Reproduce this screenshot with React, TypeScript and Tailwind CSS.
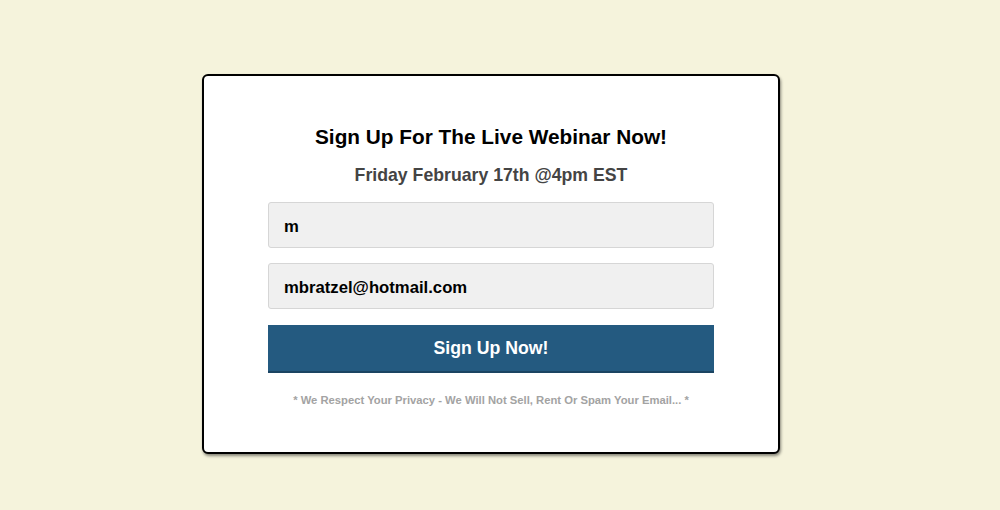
import React from "react"

export default function App() {
  return (
    <div
      className="min-h-[510px] w-full bg-[#f5f3dc] flex justify-center pt-[74px] pr-[18px]"
      style={{ fontFamily: '"Liberation Sans", Arial, sans-serif' }}
    >
      <div className="w-[578px] h-[380px] bg-white border-2 border-black rounded-[6px] shadow-[1px_2px_3px_rgba(0,0,0,0.45)] flex flex-col items-center pt-[49px]">
        <h1 className="text-[20.8px] leading-[24px] font-bold text-black">
          Sign Up For The Live Webinar Now!
        </h1>
        <h2 className="mt-[15px] text-[17.7px] leading-[22px] font-bold text-[#444]">
          Friday February 17th @4pm EST
        </h2>
        <div className="mt-[16px] w-[446px] flex flex-col">
          <input
            defaultValue="m"
            className="h-[46px] w-full bg-[#f0f0f0] border border-[#d6d6d6] rounded-[3px] px-[15px] pt-[4px] text-[16.7px] font-bold text-black outline-none"
          />
          <input
            defaultValue="mbratzel@hotmail.com"
            className="mt-[15px] h-[46px] w-full bg-[#f0f0f0] border border-[#d6d6d6] rounded-[3px] px-[15px] pt-[4px] text-[16.7px] font-bold text-black outline-none"
          />
          <button className="mt-[16px] h-[48px] w-full bg-[#245a80] border-b-2 border-[#1b4462] text-white text-[17.7px] font-bold">
            Sign Up Now!
          </button>
          <p className="mt-[19px] text-center text-[11.25px] font-bold text-[#a3a3a3]">
            * We Respect Your Privacy - We Will Not Sell, Rent Or Spam Your Email... *
          </p>
        </div>
      </div>
    </div>
  )
}
